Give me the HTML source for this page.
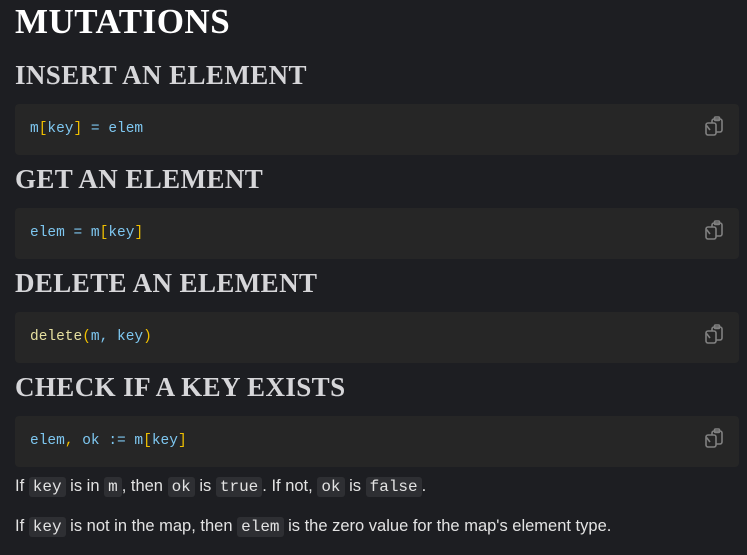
<!DOCTYPE html>
<html><head><style>
body{margin:0;background:#1d1e22;width:747px;height:555px;overflow:hidden;font-family:"Liberation Sans",sans-serif;color:#e3e3e3;position:relative}
.h{position:absolute;left:15px;margin:0;font-family:"Liberation Serif",serif;font-weight:bold;white-space:nowrap}
.h1{font-size:35px;color:#fff;top:2px;letter-spacing:0.5px}
.h2{font-size:27px;color:#d6d6d9;letter-spacing:0.4px}
.cb{position:absolute;left:15px;width:724px;height:51px;background:#262626;border-radius:4px}
.cb code{position:absolute;left:15px;top:17px;font-family:"Liberation Mono",monospace;font-size:14.5px;color:#7ec7f0}
.y{color:#f0c000}.f{color:#e6e0a0}
.cb svg{position:absolute;left:689px;top:11px}
p{position:absolute;left:15px;margin:0;font-size:16.5px;white-space:nowrap;letter-spacing:0}
p code{font-family:"Liberation Mono",monospace;font-size:16px;background:#2e2f33;border-radius:3px;padding:1px 4px}
</style></head><body>
<div class="h h1">MUTATIONS</div>
<div class="h h2" style="top:60px">INSERT AN ELEMENT</div>
<div class="cb" style="top:104px"><code>m<span class="y">[</span>key<span class="y">]</span> = elem</code><svg width="22" height="24" viewBox="0 0 22 24" fill="none" stroke="#808080" stroke-width="1.6"><rect x="8" y="4" width="10" height="13" rx="2"/><rect x="10.5" y="2" width="5" height="3.5" rx="1"/><rect x="2" y="8" width="10" height="12" rx="2" fill="#262626"/><path d="M2.5 10.5l3.5 4.5"/></svg></div>
<div class="h h2" style="top:164px">GET AN ELEMENT</div>
<div class="cb" style="top:208px"><code>elem = m<span class="y">[</span>key<span class="y">]</span></code><svg width="22" height="24" viewBox="0 0 22 24" fill="none" stroke="#808080" stroke-width="1.6"><rect x="8" y="4" width="10" height="13" rx="2"/><rect x="10.5" y="2" width="5" height="3.5" rx="1"/><rect x="2" y="8" width="10" height="12" rx="2" fill="#262626"/><path d="M2.5 10.5l3.5 4.5"/></svg></div>
<div class="h h2" style="top:268px">DELETE AN ELEMENT</div>
<div class="cb" style="top:312px"><code><span class="f">delete</span><span class="y">(</span>m, key<span class="y">)</span></code><svg width="22" height="24" viewBox="0 0 22 24" fill="none" stroke="#808080" stroke-width="1.6"><rect x="8" y="4" width="10" height="13" rx="2"/><rect x="10.5" y="2" width="5" height="3.5" rx="1"/><rect x="2" y="8" width="10" height="12" rx="2" fill="#262626"/><path d="M2.5 10.5l3.5 4.5"/></svg></div>
<div class="h h2" style="top:372px">CHECK IF A KEY EXISTS</div>
<div class="cb" style="top:416px"><code>elem<span class="y">,</span> ok := m<span class="y">[</span>key<span class="y">]</span></code><svg width="22" height="24" viewBox="0 0 22 24" fill="none" stroke="#808080" stroke-width="1.6"><rect x="8" y="4" width="10" height="13" rx="2"/><rect x="10.5" y="2" width="5" height="3.5" rx="1"/><rect x="2" y="8" width="10" height="12" rx="2" fill="#262626"/><path d="M2.5 10.5l3.5 4.5"/></svg></div>
<p style="top:477px">If <code>key</code> is in <code>m</code>, then <code>ok</code> is <code>true</code>. If not, <code>ok</code> is <code>false</code>.</p>
<p style="top:517px">If <code>key</code> is not in the map, then <code>elem</code> is the zero value for the map's element type.</p>
</body></html>
